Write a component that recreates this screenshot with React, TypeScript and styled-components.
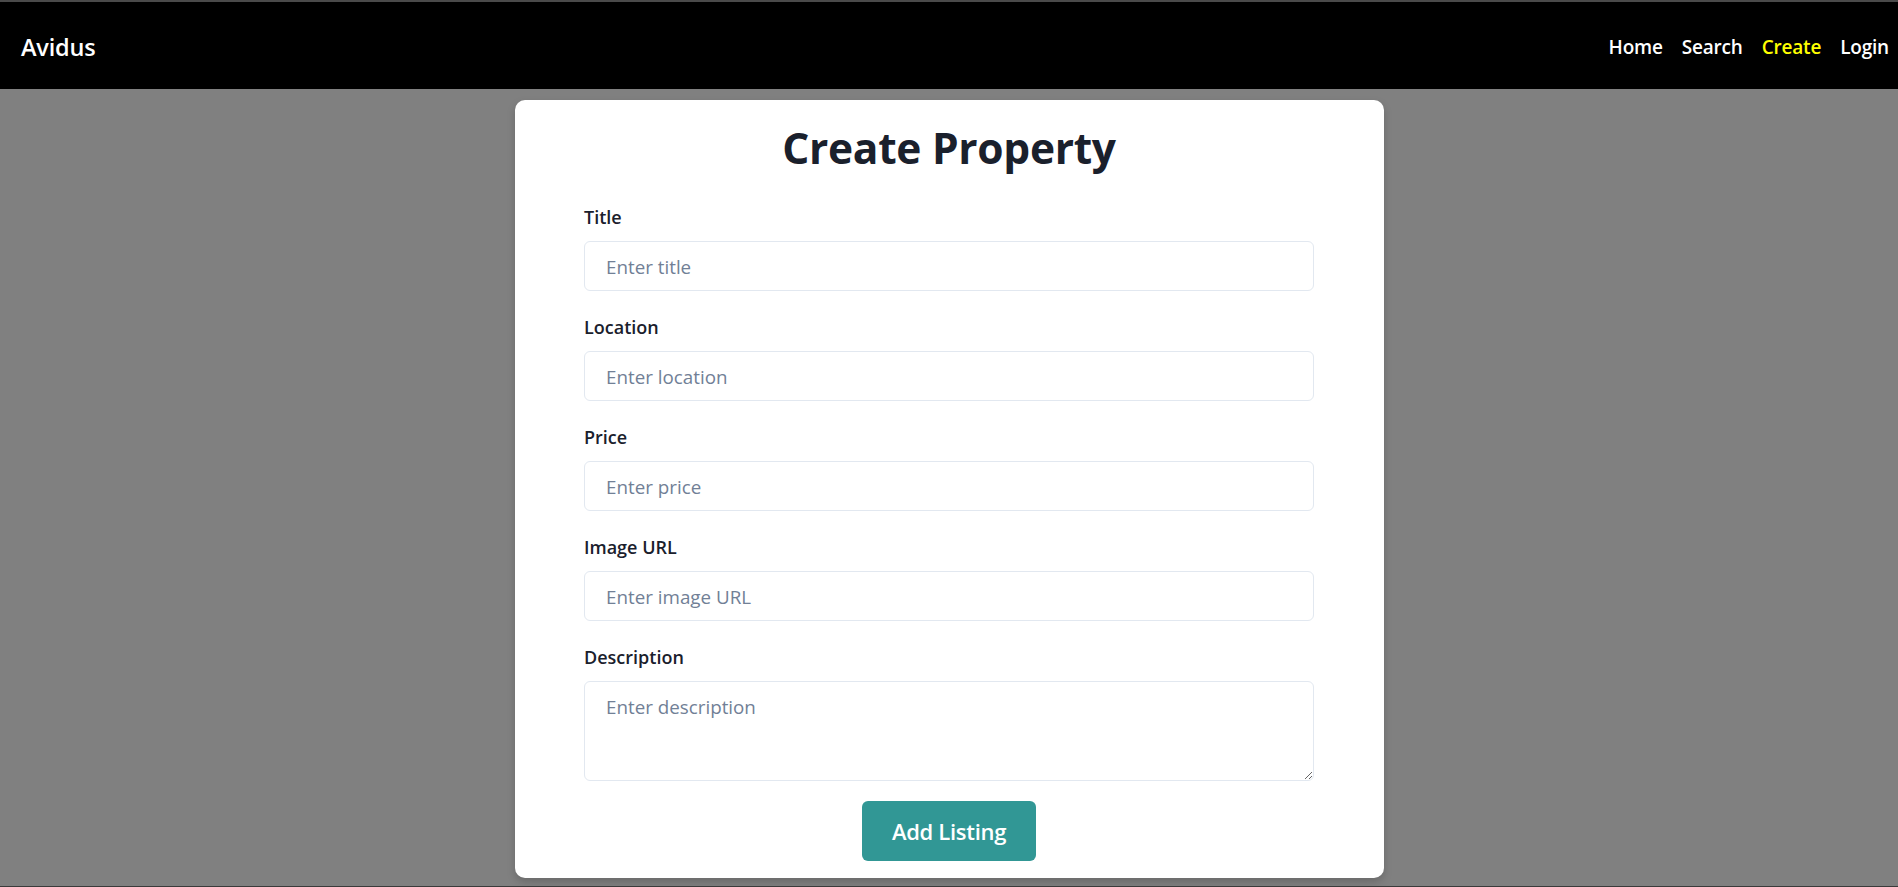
import React from "react";
import styled, { createGlobalStyle } from "styled-components";

const GlobalStyle = createGlobalStyle`
  * { box-sizing: border-box; }
  html, body { margin: 0; padding: 0; }
  body {
    background: #808080;
    font-family: "Open Sans", "Noto Sans", Arial, sans-serif;
  }
`;

const Page = styled.div`
  height: 887px;
  border-top: 2px solid #4a4a4a;
  border-bottom: 1px solid #3a3a3a;
  display: flex;
  flex-direction: column;
  overflow: hidden;
`;

const NavBar = styled.nav`
  height: 87px;
  flex: none;
  background: #000;
  display: flex;
  align-items: center;
  justify-content: space-between;
  padding: 0 9px 0 21px;
`;

const Brand = styled.div`
  color: #fff;
  font-size: 23.5px;
  font-weight: 600;
  letter-spacing: -0.2px;
  margin-top: 2px;
`;

const NavLinks = styled.div`
  display: flex;
  align-items: center;
  gap: 19px;
  margin-top: 2px;
`;

const NavLink = styled.a<{ $active?: boolean }>`
  color: ${(p) => (p.$active ? "#ffff00" : "#ffffff")};
  font-size: 19px;
  font-weight: 600;
  text-decoration: none;
  letter-spacing: -0.2px;
`;

const Main = styled.main`
  display: flex;
  justify-content: center;
  padding-top: 11px;
`;

const Card = styled.div`
  width: 869px;
  height: 778px;
  background: #fff;
  border-radius: 10px;
  box-shadow: 0 4px 8px rgba(0, 0, 0, 0.18);
  padding: 23px 0 16px;
  display: flex;
  flex-direction: column;
  align-items: center;
`;

const Heading = styled.h1`
  margin: 0 0 31px;
  height: 50px;
  line-height: 50px;
  font-size: 42.5px;
  font-weight: 700;
  color: #1a202c;
  letter-spacing: -0.3px;
`;

const Form = styled.form`
  width: 730px;
  display: flex;
  flex-direction: column;
`;

const Field = styled.div`
  display: flex;
  flex-direction: column;
  margin-bottom: 23px;
`;

const Label = styled.label`
  height: 24px;
  line-height: 24px;
  font-size: 18px;
  font-weight: 600;
  color: #1a202c;
  margin-top: 1px;
  margin-bottom: 12px;
`;

const controlStyles = `
  width: 100%;
  border: 1px solid #e2e8f0;
  border-radius: 6px;
  background: #fff;
  font-family: "Open Sans", "Noto Sans", Arial, sans-serif;
  font-size: 18.8px;
  color: #1a202c;
  outline: none;
  &::placeholder { color: #718096; opacity: 1; }
`;

const Input = styled.input`
  ${controlStyles}
  height: 50px;
  padding: 1px 21px 0;
`;

const TextArea = styled.textarea`
  ${controlStyles}
  height: 100px;
  padding: 13px 21px 8px;
  line-height: 24px;
  resize: vertical;
  display: block;
`;

const Actions = styled.div`
  display: flex;
  justify-content: center;
  margin-top: -3px;
`;

const SubmitButton = styled.button`
  width: 174px;
  height: 60px;
  border: none;
  border-radius: 6px;
  background: #319795;
  color: #fff;
  font-family: "Open Sans", "Noto Sans", Arial, sans-serif;
  font-size: 22px;
  font-weight: 600;
  letter-spacing: -0.3px;
  cursor: pointer;
`;

const fields = [
  { label: "Title", placeholder: "Enter title" },
  { label: "Location", placeholder: "Enter location" },
  { label: "Price", placeholder: "Enter price" },
  { label: "Image URL", placeholder: "Enter image URL" },
];

export default function App() {
  return (
    <>
      <GlobalStyle />
      <Page>
        <NavBar>
          <Brand>Avidus</Brand>
          <NavLinks>
            <NavLink href="#">Home</NavLink>
            <NavLink href="#">Search</NavLink>
            <NavLink href="#" $active>
              Create
            </NavLink>
            <NavLink href="#">Login</NavLink>
          </NavLinks>
        </NavBar>
        <Main>
          <Card>
            <Heading>Create Property</Heading>
            <Form onSubmit={(e) => e.preventDefault()}>
              {fields.map((f) => (
                <Field key={f.label}>
                  <Label>{f.label}</Label>
                  <Input placeholder={f.placeholder} />
                </Field>
              ))}
              <Field>
                <Label>Description</Label>
                <TextArea placeholder="Enter description" />
              </Field>
              <Actions>
                <SubmitButton type="submit">Add Listing</SubmitButton>
              </Actions>
            </Form>
          </Card>
        </Main>
      </Page>
    </>
  );
}
